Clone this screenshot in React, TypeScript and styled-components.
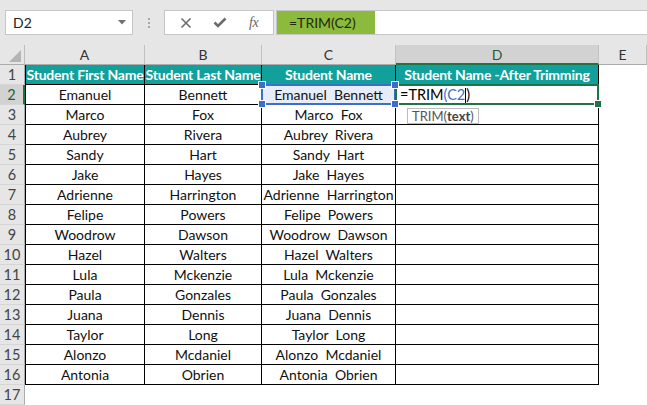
import React from "react";
import styled, { createGlobalStyle, css } from "styled-components";

const Global = createGlobalStyle`
  html, body { margin: 0; padding: 0; background: #fff; overflow: hidden; }
  body { font-family: Lato, "Liberation Sans", sans-serif; }
`;

const Page = styled.div`
  width: 647px;
  height: 405px;
  overflow: hidden;
  display: flex;
  flex-direction: column;
`;

const Toolbar = styled.div`
  height: 45px;
  box-sizing: border-box;
  padding: 10px 0 10px 5px;
  background: #e6e6e6;
  display: flex;
  align-items: stretch;
`;

const NameBox = styled.div`
  width: 128px;
  box-sizing: border-box;
  background: #fff;
  border: 1px solid #c6c6c6;
  display: flex;
  align-items: center;
  justify-content: space-between;
  padding: 0 6px 0 7px;
  font-size: 14px;
  color: #222;
`;

const Dots = styled.div`
  width: 31px;
  display: flex;
  flex-direction: column;
  align-items: center;
  justify-content: center;
  gap: 2px;
  & > span { width: 2px; height: 2px; background: #a8a8a8; display: block; }
`;

const IconBox = styled.div`
  width: 110px;
  box-sizing: border-box;
  background: #fff;
  border: 1px solid #c6c6c6;
  display: flex;
  align-items: center;
  justify-content: space-around;
  padding: 0 4px;
  color: #6b6b6b;
`;

const Fx = styled.span`
  font-family: "Liberation Serif", serif;
  font-style: italic;
  font-size: 14px;
  color: #666;
  letter-spacing: -0.5px;
`;

const FormulaBox = styled.div`
  flex: 1;
  margin-left: 2px;
  margin-right: -2px;
  box-sizing: border-box;
  background: #fff;
  border: 1px solid #c6c6c6;
  display: flex;
`;

const Highlight = styled.div`
  width: 98px;
  background: #8cba3c;
  display: flex;
  align-items: center;
  padding-left: 12px;
  box-sizing: border-box;
  font-size: 14px;
  color: #1d2a0c;
`;

const Sheet = styled.div`
  position: relative;
  display: grid;
  grid-template-columns: 25px 120px 117px 134px 203px 1fr;
  grid-auto-rows: 20px;
  font-size: 14px;
`;

const Corner = styled.div`
  background: #e6e6e6;
  border-right: 1px solid #bdbdbd;
  border-bottom: 1px solid #ababab;
  box-sizing: border-box;
  display: flex;
  align-items: flex-end;
  justify-content: flex-end;
  padding: 0 3px 2px 0;
`;

const ColHeader = styled.div<{ $active?: boolean }>`
  background: ${(p) => (p.$active ? "#d2d2d2" : "#e6e6e6")};
  border-right: 1px solid #c2c2c2;
  border-bottom: ${(p) => (p.$active ? "2px solid #217346" : "1px solid #ababab")};
  box-sizing: border-box;
  display: flex;
  align-items: center;
  justify-content: center;
  color: ${(p) => (p.$active ? "#1f5f3b" : "#333")};
  font-size: 14px;
`;

const RowHeader = styled.div<{ $active?: boolean }>`
  background: ${(p) => (p.$active ? "#d2d2d2" : "#e6e6e6")};
  border-right: ${(p) => (p.$active ? "2px solid #217346" : "1px solid #ababab")};
  border-bottom: 1px solid #d6d6d6;
  box-sizing: border-box;
  display: flex;
  align-items: center;
  justify-content: center;
  color: ${(p) => (p.$active ? "#1f5f3b" : "#444")};
  font-size: 14.5px;
`;

const cellBase = css`
  box-sizing: border-box;
  display: flex;
  align-items: center;
  justify-content: center;
  white-space: pre;
  overflow: visible;
`;

const HeadCell = styled.div<{ $first?: boolean }>`
  ${cellBase};
  background: #11a09b;
  color: #fff;
  font-weight: 700;
  font-size: 14px;
  border-right: 1px solid #000;
  border-bottom: 1px solid #000;
  ${(p) => p.$first && "border-left: 1px solid #000;"}
  letter-spacing: -0.2px;
`;

const DataCell = styled.div<{ $first?: boolean }>`
  ${cellBase};
  color: #111;
  font-size: 14px;
  border-right: 1px solid #000;
  border-bottom: 1px solid #000;
  ${(p) => p.$first && "border-left: 1px solid #000;"}
`;

const RefCell = styled(DataCell)`
  position: relative;
  background: #e7edf8;
  &::before {
    content: "";
    position: absolute;
    left: -1px;
    top: -1px;
    right: -1px;
    bottom: -1px;
    border: 2px solid #3b6fca;
    pointer-events: none;
  }
`;

const Handle = styled.span<{ $x: "l" | "r"; $y: "t" | "b"; $color: string }>`
  position: absolute;
  width: 6px;
  height: 6px;
  background: ${(p) => p.$color};
  border: 1px solid #fff;
  box-sizing: content-box;
  ${(p) => (p.$x === "l" ? "left: -4px;" : "right: -4px;")}
  ${(p) => (p.$y === "t" ? "top: -4px;" : "bottom: -4px;")}
  z-index: 2;
`;

const ActiveCell = styled(DataCell)`
  position: relative;
  justify-content: flex-start;
  padding-left: 4px;
  color: #000;
  font-size: 14.5px;
  &::before {
    content: "";
    position: absolute;
    left: -1px;
    top: -1px;
    right: -1px;
    bottom: -1px;
    border: 2px solid #217346;
    pointer-events: none;
  }
`;

const Blue = styled.span`
  color: #3b6fca;
`;

const Caret = styled.span`
  display: inline-block;
  width: 1px;
  height: 15px;
  background: #000;
  vertical-align: middle;
`;

const EmptyCell = styled.div``;

const Tooltip = styled.div`
  position: absolute;
  left: 407px;
  top: 63px;
  width: 72px;
  height: 16px;
  box-sizing: border-box;
  padding: 0 4px;
  background: #fff;
  border: 1px solid #bcbcbc;
  font-size: 13px;
  color: #555;
  display: flex;
  align-items: center;
  z-index: 3;
  & b { font-weight: 700; color: #444; }
`;

const students: [string, string][] = [
  ["Emanuel", "Bennett"],
  ["Marco", "Fox"],
  ["Aubrey", "Rivera"],
  ["Sandy", "Hart"],
  ["Jake", "Hayes"],
  ["Adrienne", "Harrington"],
  ["Felipe", "Powers"],
  ["Woodrow", "Dawson"],
  ["Hazel", "Walters"],
  ["Lula", "Mckenzie"],
  ["Paula", "Gonzales"],
  ["Juana", "Dennis"],
  ["Taylor", "Long"],
  ["Alonzo", "Mcdaniel"],
  ["Antonia", "Obrien"],
];

export default function App() {
  return (
    <Page>
      <Global />
      <Toolbar>
        <NameBox>
          <span>D2</span>
          <svg width="8" height="5" viewBox="0 0 8 5">
            <polygon points="0,0 8,0 4,4.5" fill="#707070" />
          </svg>
        </NameBox>
        <Dots>
          <span />
          <span />
          <span />
        </Dots>
        <IconBox>
          <svg width="12" height="12" viewBox="0 0 12 12">
            <path d="M1.5 1.5 L10.5 10.5 M10.5 1.5 L1.5 10.5" stroke="#6b6b6b" strokeWidth="1.6" fill="none" />
          </svg>
          <svg width="14" height="11" viewBox="0 0 14 11">
            <path d="M1.5 5.5 L5 9 L12.5 1.5" stroke="#6b6b6b" strokeWidth="2.6" fill="none" />
          </svg>
          <Fx>fx</Fx>
        </IconBox>
        <FormulaBox>
          <Highlight>=TRIM(C2)</Highlight>
        </FormulaBox>
      </Toolbar>
      <Sheet>
        <Corner>
          <svg width="12" height="12" viewBox="0 0 12 12">
            <polygon points="12,0 12,12 0,12" fill="#b4b4b4" />
          </svg>
        </Corner>
        <ColHeader>A</ColHeader>
        <ColHeader>B</ColHeader>
        <ColHeader>C</ColHeader>
        <ColHeader $active>D</ColHeader>
        <ColHeader>E</ColHeader>

        <RowHeader>1</RowHeader>
        <HeadCell $first>Student First Name</HeadCell>
        <HeadCell>Student Last Name</HeadCell>
        <HeadCell>Student Name</HeadCell>
        <HeadCell>Student Name -After Trimming</HeadCell>
        <EmptyCell />

        {students.map(([first, last], i) => {
          const row = i + 2;
          const isActive = row === 2;
          return (
            <React.Fragment key={row}>
              <RowHeader $active={isActive}>{row}</RowHeader>
              <DataCell $first>{first}</DataCell>
              <DataCell>{last}</DataCell>
              {isActive ? (
                <RefCell>
                  {`${first}  ${last}`}
                  <Handle $x="l" $y="t" $color="#3b6fca" />
                  <Handle $x="r" $y="t" $color="#3b6fca" />
                  <Handle $x="l" $y="b" $color="#3b6fca" />
                  <Handle $x="r" $y="b" $color="#3b6fca" />
                </RefCell>
              ) : (
                <DataCell>{`${first}  ${last}`}</DataCell>
              )}
              {isActive ? (
                <ActiveCell>
                  <span>
                    =TRIM<Blue>(C2</Blue>
                    <Caret />)
                  </span>
                  <Handle $x="r" $y="b" $color="#217346" />
                </ActiveCell>
              ) : (
                <DataCell />
              )}
              <EmptyCell />
            </React.Fragment>
          );
        })}

        <RowHeader>17</RowHeader>
        <EmptyCell />
        <EmptyCell />
        <EmptyCell />
        <EmptyCell />
        <EmptyCell />

        <Tooltip>
          <span>
            TRIM(<b>text</b>)
          </span>
        </Tooltip>
      </Sheet>
    </Page>
  );
}
